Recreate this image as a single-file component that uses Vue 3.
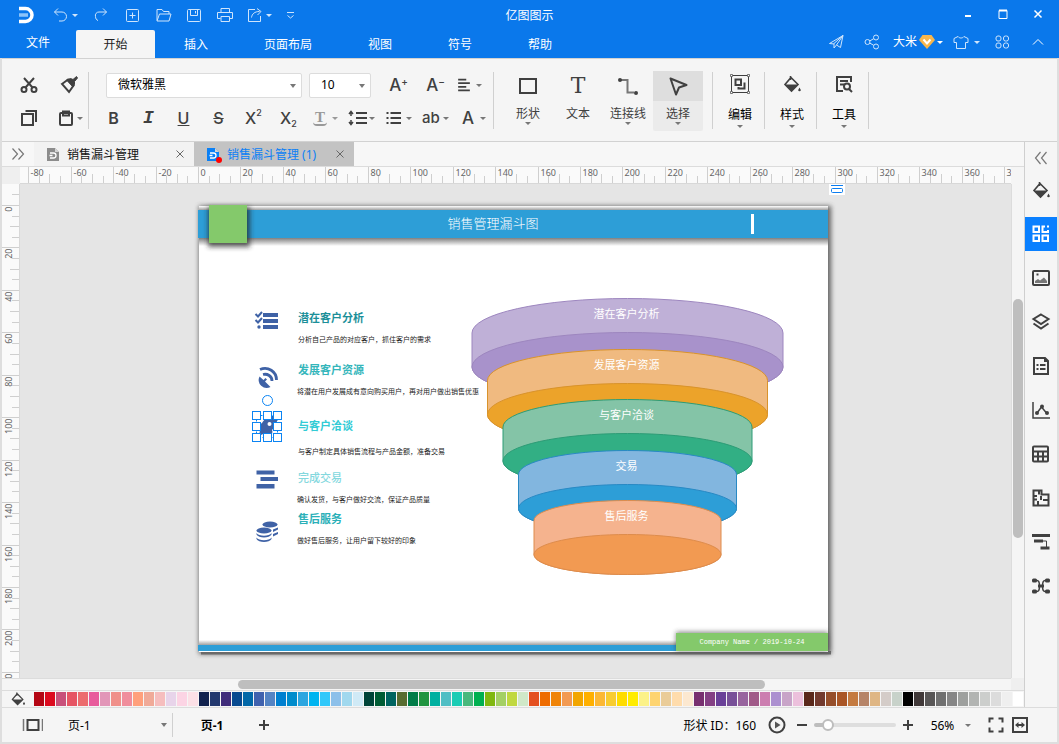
<script setup>
import { h, ref } from 'vue'

const shapes = {
  undo: '<path d="M8 3.500 4.500 7 8 10.500M4.500 7H12a3.500 3.500 0 0 1 0 9H9"/>',
  redo: '<path d="M12 3.500 15.500 7 12 10.500M15.500 7H8a3.500 3.500 0 0 0-3.500 4.500c0 2 1 3.500 2.500 4"/>',
  add: '<rect x="4.500" y="4.500" width="12" height="12" rx="1"/><path d="M10.500 7.500v6M7.500 10.500h6"/>',
  folder: '<path d="M4 15.500V4.500h5l1.500 2h5.500v2.500M4 16l2.500-7H18l-2 7z"/>',
  save: '<rect x="3.500" y="4.500" width="13" height="12" rx="1"/><path d="M6.500 4.500v6h7v-6M11.500 6v2.500"/>',
  print: '<path d="M6 7.500v-4h8.500v4M5.500 13.500h-3v-6h15v6h-3M6 11.500h8.500v5H6z"/>',
  exportTo: '<path d="M10 4.500H3.500v12h12V11M6.500 12.500c.5-3.500 3-6 8-6M12 3.500l4 3-3.500 3.500"/>',
  more: '<path d="M7 7.500h7M7.500 10.500l3 2.500 3-2.500"/>',
  plane: '<path d="M3.500 11.500 17 3.500l-2.500 12-4-2.500-2.500 3v-4.500L17 3.500M3.500 11.500l4.500.5M10.500 13 17 3.500"/>',
  share: '<circle cx="5.500" cy="10" r="2.500"/><circle cx="14" cy="5.500" r="2.500"/><circle cx="14" cy="14.500" r="2.500"/><path d="m7.700 9 4-2.300M7.700 11l4 2.300"/>',
  shirt: '<path d="M7 4.500 3 6.500v4h2.500v6h9v-6H17v-4l-4-2c-1.500 2-4.500 2-6 0z"/>',
  clover: '<rect x="4" y="4" width="5" height="5" rx="2"/><rect x="11.500" y="4" width="5" height="5" rx="2"/><rect x="4" y="11" width="5" height="5" rx="2"/><rect x="11.500" y="11" width="5" height="5" rx="2"/>',
  up: '<path d="m5 12.500 5-5 5 5" stroke="#fff"/>',
  diamond: '<path d="M5.500 3h9L18 8l-8 9L2 8z" fill="#f7b64b" stroke="none"/><path d="m6.500 7.500 3.500 4 3.500-4" stroke="#fff" stroke-width="2"/>',
  cut: '<circle cx="5" cy="14.500" r="2.500"/><circle cx="15" cy="14.500" r="2.500"/><path d="m6.500 12.500 8.500-9.500M13.500 12.500 5 3"/>',
  brush: '<path d="M3 9 9 4.500l5.500 6L10 17z"/><path d="m7.500 5 4-1.500 2.500 1 3.500-3 1 1.500-3 3.500v3l-1.500 2.500z" fill="currentColor" stroke-width="1"/>',
  copy: '<path d="M3 6h11v11H3zM6.500 3H17v11"/>',
  paste: '<rect x="4" y="5" width="12" height="12" rx="1"/><path d="M7 3.500h6v4H7z"/>',
  align: '<path d="M3.500 4h9M3.500 8h13M3.500 12h9M3.500 16h13"/>',
  lines: '<path d="M9 5h11M9 10h11M9 15h11"/><path d="M4 4v4M4 12v4M2 6l2-2.500L6 6M2 14l2 2.500L6 14" stroke-width="1.500"/>',
  bullets: '<path d="M6.500 5H17M6.500 10H17M6.500 15H17M2.500 5h2M2.500 10h2M2.500 15h2"/>',
  square: '<rect x="2" y="3" width="16" height="14"/>',
  connector: '<path d="M3 4h6.500v12.500H16" stroke="#777"/><circle cx="2" cy="4" r="2" fill="currentColor" stroke="none"/><circle cx="18" cy="17" r="2" fill="currentColor" stroke="none"/>',
  pointer: '<path d="m2.500 2.500 16 6.500-7.500 2.500L8 18.500z" stroke-linejoin="round"/>',
  group: '<path d="M1.500 1.500h17v17h-17z" stroke-width="1"/><path d="M5.500 5.500h5.500v5.500H5.500zM14.500 8.500v6h-6M8.500 13v2.500"/><g fill="#fff" stroke-width="1"><circle cx="1.500" cy="1.500" r="1.200"/><circle cx="18.500" cy="1.500" r="1.200"/><circle cx="1.500" cy="18.500" r="1.200"/><circle cx="18.500" cy="18.500" r="1.200"/></g>',
  bucket: '<path d="M8.500 2v4M9 3.500 16 10.500l-6.500 6.500L3 10.500z" stroke-width="1.600"/><path d="M3 10.500h13L9.500 17zM17.500 13.500l1.300 2.500a1.300 1.300 0 1 1-2.600 0z" fill="currentColor" stroke="none"/>',
  finder: '<path d="M17 8V3H3v14h6M6 7h8M6 10.500h4"/><circle cx="13" cy="12.500" r="3"/><path d="m15 15 3 3"/>',
  collapse: '<path d="m9.500 4-5 6 5 6M15.500 4l-5 6 5 6" stroke-width="1.200" stroke="#777"/>',
  expand: '<path d="m4.500 4.500 5 5.500-5 5.500M10.500 4.500l5 5.500-5 5.500" stroke-width="1.200" stroke="#777"/>',
  library: '<path d="M2.500 2.500h5.500v5.500H2.500zM2.500 11.500h5.500v5.500H2.500zM11.500 11.500h5.500v5.500h-5.500zM14 2.500h-2.500v5.500h5.500V6"/><path d="M16 2.500h2" stroke-width="2"/>',
  image: '<rect x="2" y="3" width="16" height="14" rx="1"/><path d="M4 15v-2l3-2 2 1.500 4-3 3 3.500v2z" fill="#777" stroke="none"/><path d="M5.500 6.500h2"/>',
  layers: '<path d="m10 2.500 7.500 4.500-7.500 5-7.500-5zM2.500 11.500l7.500 5 7.500-5"/>',
  note: '<path d="M3 2h11l3 3v13H3zM5.500 9h2M9 9h5.500M5.500 13h2M9 13h5.500" /><path d="M13 1v5h5" fill="currentColor" stroke="none"/>',
  chart: '<path d="M2 2v16h17M6 13l4.500-6 5 6" stroke-width="1.500"/><g fill="currentColor" stroke="none"><circle cx="6" cy="13" r="2"/><circle cx="11" cy="6.500" r="2"/><circle cx="16" cy="13" r="2"/></g>',
  table: '<rect x="2" y="2.500" width="15" height="15" rx="1"/><path d="M2 7.500h15M2 12.500h15M7 7.500v10M12 7.500v10"/>',
  floor: '<path d="M2.500 2.500h8v4h7v11h-15zM2.500 8h3.500M8 2.500v4M7 17.500V13M17 12h-5M10 8v4M2.500 11.500H6"/>',
  gantt: '<path d="M1 3.500h18M3 9h9M9.500 16h9" stroke-width="3"/><path d="M12 9h3.500v7" stroke-width="1"/>',
  mind: '<path d="M5 4.500h1c2 0 2.500 2 2.500 5.500s-.5 5.500-2.500 5.500H5M15 4.500h-1c-2 0-2.500 2-2.500 5.500s.5 5.500 2.500 5.500h1" stroke-width="1.500"/><g fill="currentColor" stroke="none"><rect x="1" y="2.500" width="5" height="4" rx="1.500"/><rect x="14" y="2.500" width="5" height="4" rx="1.500"/><rect x="1" y="13.500" width="5" height="4" rx="1.500"/><rect x="14" y="13.500" width="5" height="4" rx="1.500"/><rect x="7" y="8.500" width="6" height="3"/></g>',
  doc: '<path d="M4 4h8l4 4v9H4z" fill="currentColor" stroke="none"/><path d="M12 4l4 4h-4z" fill="#d5d5d5" stroke="none"/><path d="M7 9h3.500a2.500 2.500 0 0 1 0 5H7M6.500 11.500h3" stroke="#fff" stroke-width="1.300"/>',
  cross: '<path d="m6.500 6.500 7 7M13.500 6.500l-7 7" stroke-width="1"/>',
  pageView: '<rect x="5" y="5" width="11" height="10"/><path d="M1 4v12M20 4v12" stroke="#777" stroke-width="1.500"/>',
  plus: '<path d="M5 10h10M10 5v10"/>',
  minus: '<path d="M5 10h10"/>',
  play: '<circle cx="10" cy="10" r="7.500"/><path d="m8 6.500 5.500 3.500L8 13.500z" fill="#555" stroke="none"/>',
  full: '<path d="M3.500 7.500v-4h4M12.500 3.500h4v4M16.500 12.500v4h-4M7.500 16.500h-4v-4"/>',
  fit: '<rect x="3" y="3" width="14" height="14"/><path d="M6 10h8"/><path d="M8.500 7v6L5 10zM11.500 7v6l3.500-3z" fill="currentColor" stroke="none"/>',
  minimize: '<path d="M7 11h6" stroke-width="2"/>',
  maximize: '<path d="M6 5.500h8v8H6z"/><path d="M6 5.500h8" stroke-width="2"/>',
  close: '<path d="m6.500 5.500 7 7M13.500 5.500l-7 7" stroke-width="1.500"/>'
}

const Icon = (props) =>
  h('svg', {
    class: 'icon',
    viewBox: '0 0 20 20',
    fill: 'none',
    stroke: 'currentColor',
    'stroke-width': props.thin ? 1 : 2,
    'aria-hidden': 'true',
    innerHTML: shapes[props.name]
  })
Icon.props = { name: String, thin: Boolean }

const fonts = ref('微软雅黑')
const size = ref('10')
const zoom = ref(12)

const quick = [
  ['add', '新建'], ['folder', '打开'], ['save', '保存'], ['print', '打印']
]
const menus = [
  ['文件', 'file'], ['开始', 'active'], ['插入', ''], ['页面布局', 'wide'], ['视图', ''], ['符号', ''], ['帮助', '']
]
const tools = [
  { label: '形状', icon: 'square', drop: true },
  { label: '文本', glyph: 'T' },
  { label: '连接线', icon: 'connector', drop: true },
  { label: '选择', icon: 'pointer', drop: true, on: true }
]
const panels = [
  { label: '编辑', icon: 'group' }, { label: '样式', icon: 'bucket' }, { label: '工具', icon: 'finder' }
]
const side = [
  ['bucket', '填充'], ['library', '符号库'], ['image', '图片'], ['layers', '图层'], ['note', '备注'],
  ['chart', '图表'], ['table', '表格'], ['floor', '平面图'], ['gantt', '甘特图'], ['mind', '思维导图']
]

const swatches = (
  'b40614 dc0a1e c8507a e65564 ec6c6e e85c9c e296b8 f0908a f08e9c ffa07c f0aa98 f6bebe e8d4ea fcd4e4 fce0e6 ' +
  '11224e 22386e 402c7a 084a90 0268a8 4062ae 5484c4 0080d0 008ccc 2ca6e0 00b4f0 30c8fa 8cc0ea a0d8ee d0eaf6 ' +
  '004438 005c34 006460 586c30 007c48 209440 00b0a0 50bec4 1accb4 48b87c 00b050 80b810 a4d064 c0d840 d0e8c8 ' +
  'e45020 ee6c00 f08408 f29a52 f2a600 ffb000 fcb834 f8cc30 ffdc00 ffec00 fcf288 fed470 eacc98 ffdcac fce8d0 ' +
  '783070 844084 6a4098 785098 98649e a05a88 cc7eb0 ac90d0 c8a4c8 ecc0dc ' +
  '5a281a 723a2e 964e2a aa5626 c47a40 b68468 dfb684 d4ccc8 c8d2ca ' +
  '000000 403838 585656 707070 868686 9ea09e b2b4b2 cccecc dcdcdc efefef ffffff'
).split(' ')

// One tick every five units, a label every twenty.
const STEP = 10.61
const ticks = (origin, from, to) => {
  const out = []
  for (let i = from; i <= to; i++) {
    const kind = i % 4 === 0 ? 0 : i % 2 === 0 ? 1 : 2
    out.push({ at: Math.floor(origin + i * STEP) + 0.5, kind, label: kind === 0 ? String(i * 5) : '' })
  }
  return out
}
const hTicks = ticks(178.5, -16, 77)
const vTicks = ticks(21.5, -1, 44)
const start = [0, 7, 9]
const vStart = [0, 8, 10]

const tiers = [
  { label: '潜在客户分析', top: 298.5, rx: 155.5, ry: 34.5, ty: 318, light: '#bfb0d7', dark: '#a892cb', line: '#9d86bf' },
  { label: '发展客户资源', top: 349.5, rx: 140, ry: 31, ty: 369, light: '#f0ba80', dark: '#eca32a', line: '#d9932b' },
  { label: '与客户洽谈', top: 399.5, rx: 124.5, ry: 27.5, ty: 419, light: '#84c4a7', dark: '#32af84', line: '#2d9c76' },
  { label: '交易', top: 450.5, rx: 109, ry: 24, ty: 470, light: '#82b6df', dark: '#2d9ed7', line: '#2889c4' },
  { label: '售后服务', top: 500.5, rx: 93.5, ry: 20, ty: 520, light: '#f5b38e', dark: '#f29a52', line: '#de8c4c' }
]
const MID = 627.5
const body = (t) => {
  const a = t.top + t.ry
  const b = a + 34
  return `M${MID - t.rx} ${a}A${t.rx} ${t.ry} 0 0 1 ${MID + t.rx} ${a}V${b}A${t.rx} ${t.ry} 0 0 1 ${MID - t.rx} ${b}Z`
}

const notes = [
  { head: '潜在客户分析', text: '分析自己产品的对应客户，抓住客户的需求', y: 322, ty: 342, x: 298, color: '#1c8f99' },
  { head: '发展客户资源', text: '将潜在用户发展成有意向购买用户，再对用户做出销售优惠', y: 374, ty: 394, x: 297, color: '#35b6bb' },
  { head: '与客户洽谈', text: '与客户制定具体销售流程与产品金额，准备交易', y: 430, ty: 454, x: 298, color: '#32cbd5' },
  { head: '完成交易', text: '确认发货，与客户做好交流，保证产品质量', y: 482, ty: 502, x: 297, color: '#84d8de', light: true },
  { head: '售后服务', text: '做好售后服务，让用户留下较好的印象', y: 523, ty: 543, x: 297, color: '#2bb0b8' }
]
const handles = [
  [252, 411], [263, 411], [273, 411], [252, 422], [273, 422], [252, 433], [263, 433], [273, 433]
]
</script>

<template>
  <div class="app">
    <header class="top">
      <div class="titlebar">
        <div class="quick">
          <svg class="logo" viewBox="0 0 16 18" aria-hidden="true">
            <path d="M0 2.500h6.500a6.500 6.500 0 0 1 0 13H0" fill="none" stroke="#fff" stroke-width="3.500" />
            <path d="M0 9h9" stroke="#8cc4fa" stroke-width="3.500" />
          </svg>
          <button class="q-undo" aria-label="撤销"><Icon name="undo" thin /><i class="caret"></i></button>
          <button class="q" aria-label="重做"><Icon name="redo" thin /></button>
          <button v-for="q in quick" :key="q[0]" class="q" :aria-label="q[1]"><Icon :name="q[0]" thin /></button>
          <button class="q-export" aria-label="导出"><Icon name="exportTo" thin /><i class="caret"></i></button>
          <button class="q-more" aria-label="更多"><Icon name="more" thin /></button>
        </div>
        <div class="title">亿图图示</div>
        <div class="window">
          <button aria-label="最小化"><Icon name="minimize" thin /></button>
          <button aria-label="最大化"><Icon name="maximize" thin /></button>
          <button aria-label="关闭"><Icon name="close" thin /></button>
        </div>
      </div>
      <div class="menubar">
        <nav class="menus">
          <button v-for="m in menus" :key="m[0]" class="menu" :class="m[1]">{{ m[0] }}</button>
        </nav>
        <div class="account">
          <button class="acc" aria-label="发送"><Icon name="plane" thin /></button>
          <button class="acc" aria-label="分享"><Icon name="share" thin /></button>
          <button class="user">大米<Icon name="diamond" thin /><i class="caret"></i></button>
          <button class="skin" aria-label="皮肤"><Icon name="shirt" thin /><i class="caret"></i></button>
          <button class="acc" aria-label="应用"><Icon name="clover" thin /></button>
          <button class="acc" aria-label="收起"><Icon name="up" thin /></button>
        </div>
      </div>
    </header>

    <div class="frame">
      <section class="ribbon">
        <div class="clip">
          <div class="row">
            <button class="c1" aria-label="剪切"><Icon name="cut" /></button>
            <button class="c2" aria-label="格式刷"><Icon name="brush" /></button>
          </div>
          <div class="row">
            <button class="c1" aria-label="复制"><Icon name="copy" /></button>
            <button class="c3" aria-label="粘贴"><Icon name="paste" /><i class="caret"></i></button>
          </div>
        </div>
        <span class="sep"></span>
        <div class="fontgroup">
          <div class="row first">
            <label class="pick family">
              <select v-model="fonts" aria-label="字体"><option>微软雅黑</option></select>
            </label>
            <label class="pick size">
              <select v-model="size" aria-label="字号"><option>10</option></select>
            </label>
            <button class="grow" aria-label="增大字号">A<sup>+</sup></button>
            <button class="grow" aria-label="减小字号">A<sup>−</sup></button>
            <button class="drop" aria-label="对齐"><Icon name="align" class="small-icon" /><i class="caret"></i></button>
          </div>
          <div class="row second">
            <button class="fmt">B</button>
            <button class="fmt ital">I</button>
            <button class="fmt under">U</button>
            <button class="fmt strike">S</button>
            <button class="fmt ex">X<sup>2</sup></button>
            <button class="fmt ex">X<sub>2</sub></button>
            <button class="drop dim"><span class="glyph arc">T</span><i class="caret"></i></button>
            <button class="drop" aria-label="行距"><Icon name="lines" /><i class="caret"></i></button>
            <button class="drop" aria-label="列表"><Icon name="bullets" /><i class="caret"></i></button>
            <button class="drop"><span class="glyph">ab</span><i class="caret"></i></button>
            <button class="drop"><span class="glyph big">A</span><i class="caret"></i></button>
          </div>
        </div>
        <span class="sep"></span>
        <div class="tools">
          <button v-for="t in tools" :key="t.label" class="tool" :class="{ on: t.on }">
            <span class="pic"><Icon v-if="t.icon" :name="t.icon" /><span v-else class="slab">{{ t.glyph }}</span></span>
            <span class="cap">{{ t.label }}</span>
            <i v-if="t.drop" class="caret"></i>
          </button>
        </div>
        <template v-for="p in panels" :key="p.label">
          <span class="sep"></span>
          <button class="tool panel">
            <span class="pic"><Icon :name="p.icon" /></span>
            <span class="cap">{{ p.label }}</span>
            <i class="caret"></i>
          </button>
        </template>
        <span class="sep"></span>
      </section>

      <main class="work">
        <div class="left">
          <div class="docs">
            <button class="expand" aria-label="展开"><Icon name="expand" /></button>
            <div class="doc"><Icon name="doc" class="file" /><span>销售漏斗管理</span><button aria-label="关闭"><Icon name="cross" /></button></div>
            <div class="doc current"><Icon name="doc" class="file" /><b class="dot"></b><span>销售漏斗管理 (1)</span><button aria-label="关闭"><Icon name="cross" /></button></div>
          </div>
          <div class="hruler">
            <div class="corner"></div>
            <svg class="fill">
              <g v-for="t in hTicks" :key="t.at">
                <line :x1="t.at" :x2="t.at" :y1="start[t.kind]" y2="16" />
                <text v-if="t.label" :x="t.at + 2" y="9">{{ t.label }}</text>
              </g>
            </svg>
            <div class="cap-end"></div>
          </div>
          <div class="stage">
            <div class="vruler">
              <svg class="fill">
                <g v-for="t in vTicks" :key="t.at">
                  <line :x1="vStart[t.kind]" x2="17" :y1="t.at" :y2="t.at" />
                  <text v-if="t.label" :transform="`translate(10 ${t.at + 1}) rotate(-90)`" text-anchor="end">{{ t.label }}</text>
                </g>
              </svg>
            </div>
            <div class="canvas">
              <svg class="drawing" width="991" height="494">
                <defs>
                  <filter id="soft" x="-20%" y="-40%" width="140%" height="200%"><feGaussianBlur stdDeviation="2.500" /></filter>
                  <linearGradient id="fade" x1="0" y1="0" x2="0" y2="1">
                    <stop offset="0" stop-color="#555" stop-opacity=".75" /><stop offset="1" stop-color="#555" stop-opacity="0" />
                  </linearGradient>
                  <linearGradient id="rise" x1="0" y1="1" x2="0" y2="0">
                    <stop offset="0" stop-color="#777" stop-opacity=".7" /><stop offset="1" stop-color="#777" stop-opacity="0" />
                  </linearGradient>
                </defs>
                <g transform="translate(-20 -184)">
                  <rect x="199" y="206" width="632" height="448" fill="#555" opacity=".9" filter="url(#soft)" />
                  <path d="M201 654.500V651H831V654.500Z" fill="#6a6a6a" />
                  <rect x="199" y="206" width="629" height="446" fill="#fff" />
                  <rect x="199" y="206" width="629" height="4" fill="url(#rise)" />
                  <rect x="199" y="238" width="629" height="8" fill="url(#fade)" />
                  <rect x="198" y="210" width="630" height="28" fill="#2d9ed7" />
                  <rect x="208" y="207" width="42" height="40" fill="#222" opacity=".7" filter="url(#soft)" />
                  <rect x="209" y="205" width="38" height="38" fill="#84c96b" />
                  <text x="493" y="228" class="kai">销售管理漏斗图</text>
                  <rect x="751" y="214" width="3" height="20" fill="#fff" />
                  <rect x="199" y="640" width="629" height="5" fill="url(#rise)" />
                  <rect x="198" y="645" width="630" height="6" fill="#2d9ed7" />
                  <rect x="676" y="632" width="152" height="19" fill="#333" opacity=".6" filter="url(#soft)" />
                  <rect x="676" y="633" width="152" height="18" fill="#84c96b" />
                  <text x="752" y="644" class="company">Company Name / 2019-10-24</text>

                  <g v-for="t in tiers" :key="t.label" :stroke="t.line" stroke-width="1">
                    <path :d="body(t)" :fill="t.light" />
                    <ellipse :cx="MID" :cy="t.top + t.ry + 34" :rx="t.rx" :ry="t.ry" :fill="t.dark" />
                    <text :x="MID - 1" :y="t.ty" class="tier">{{ t.label }}</text>
                  </g>

                  <g v-for="n in notes" :key="n.head">
                    <text x="298" :y="n.y" class="head" :class="{ light: n.light }" :fill="n.color">{{ n.head }}</text>
                    <text :x="n.x" :y="n.ty" class="small">{{ n.text }}</text>
                  </g>

                  <g fill="#3f62a6">
                    <path d="M263 313h15v4h-15zM263 319h15v4h-15zM263 325h15v4h-15z" />
                    <circle cx="259" cy="327" r="1.700" />
                    <path d="m255.500 314 2.500 2.500 4-4.500M255.500 320l2.500 2.500 4-4.500" fill="none" stroke="#3f62a6" stroke-width="2" />
                    <path d="M259.500 376.500a8 8 0 0 0 11 10.500l-5.500-5.500 2-2-1.500-1.500-2 2z" />
                    <g fill="none" stroke="#3f62a6" stroke-width="2.800">
                      <path d="M260 369.500c8-3.500 16.500 2 16.500 10.500" />
                      <path d="M263 374.500c4.500-1 9 1.500 9 6.500" />
                    </g>
                    <path d="M256.500 470.500h18v4h-18zM260.500 477h17.500v4h-17.500zM256.500 484h18v4.500h-18z" />
                    <ellipse cx="270" cy="524.500" rx="7.500" ry="3" />
                    <ellipse cx="264" cy="530.500" rx="7.500" ry="3" />
                    <path d="M256.500 533c2 3.500 13 3.500 15 0v1.500c-2 4-13 4-15 0zM256.500 537.500c2 3.500 13 3.500 15 0v1.500c-2 4-13 4-15 0zM273 529.500l5-2v2l-5 2.500zM273 534l5-2v2l-5 2.500z" />
                    <path d="M277 416c-7-1-12 2-15 7l-6 4c0 2 2 3 4 3l-1 6 6-3 4 4c3-1 4-5 3-7 4-4 6-9 5-14z" />
                    <circle cx="269.500" cy="424" r="2" fill="#fff" />
                  </g>
                  <g fill="#fff" stroke="#0b84f3" stroke-width="1">
                    <path d="M256.500 415.500h21v22h-21z" fill="none" stroke-dasharray="2 2" />
                    <circle cx="267.500" cy="400.500" r="5" />
                    <rect v-for="(p, i) in handles" :key="i" :x="p[0] + 0.5" :y="p[1] + 0.5" width="8" height="8" />
                  </g>
                  <g fill="#fff" stroke="#0b7df0">
                    <rect x="829" y="184" width="16" height="11" stroke="none" />
                    <path d="M831 185.500h12" />
                    <rect x="831.500" y="188.500" width="11" height="4" rx="1" />
                  </g>
                </g>
              </svg>
            </div>
            <div class="vscroll"><div class="vthumb"></div></div>
          </div>
          <div class="hscroll"><div class="track"><div class="hthumb"></div></div></div>
          <div class="palette">
            <button class="fillpick" aria-label="填充颜色"><Icon name="bucket" /></button>
            <button v-for="c in swatches" :key="c" class="sw" :aria-label="'#' + c" :style="{ background: '#' + c }"></button>
          </div>
        </div>
        <aside class="side">
          <button class="fold" aria-label="折叠"><Icon name="collapse" /></button>
          <button v-for="(s, i) in side" :key="s[0]" class="sbtn" :class="{ on: i === 1 }" :aria-label="s[1]"><Icon :name="s[0]" /></button>
        </aside>
      </main>

      <footer class="status">
        <button class="view" aria-label="页面视图"><Icon name="pageView" /></button>
        <label class="page">
          <select aria-label="页面"><option>页-1</option></select>
        </label>
        <button class="sheet">页-1</button>
        <button class="addpage" aria-label="添加页面"><Icon name="plus" /></button>
        <div class="right">
          <span class="info">形状 ID：160</span>
          <button class="s1" aria-label="播放"><Icon name="play" /></button>
          <button class="s2" aria-label="缩小"><Icon name="minus" /></button>
          <input v-model="zoom" type="range" min="0" max="100" aria-label="缩放" />
          <button class="s2" aria-label="放大"><Icon name="plus" /></button>
          <button class="pct">56%<i class="caret"></i></button>
          <button class="s3" aria-label="全屏"><Icon name="full" /></button>
          <button class="s3" aria-label="适合页面"><Icon name="fit" /></button>
        </div>
      </footer>
    </div>
  </div>
</template>

<style>
body {
  margin: 0;
}
</style>

<style scoped>
.app {
  display: flex;
  flex-direction: column;
  min-height: 100vh;
  background: #f5f5f5;
  color: #111;
  font: 12px/16px "Noto Sans", "Noto Sans CJK SC", sans-serif;
}
.app * {
  box-sizing: border-box;
}
button {
  display: flex;
  align-items: center;
  justify-content: center;
  flex: none;
  margin: 0;
  padding: 0;
  border: 0;
  background: none;
  color: inherit;
  font: inherit;
}
select {
  appearance: none;
  border: 0;
  background: none;
  color: inherit;
  font: inherit;
  outline: 0;
}
.icon {
  width: 20px;
  height: 20px;
  flex: none;
  display: block;
}
.caret {
  width: 0;
  height: 0;
  flex: none;
  border: 3px solid transparent;
  border-top-color: currentColor;
  border-bottom: 0;
}
.top {
  background: #0a78eb;
  color: #fff;
}
.titlebar {
  display: grid;
  grid-template-columns: 1fr auto 1fr;
  height: 30px;
  align-items: center;
}
.title {
  padding-top: 2px;
}
.quick {
  display: flex;
  align-items: center;
  color: #cfe5fc;
}
.logo {
  width: 16px;
  height: 18px;
  margin: 0 16px 0 19px;
  flex: none;
}
.q {
  width: 31px;
}
.q-undo {
  width: 34px;
  padding-right: 8px;
  gap: 2px;
}
.q-export {
  width: 36px;
  gap: 1px;
}
.q-more {
  width: 28px;
}
.window {
  display: flex;
  justify-content: flex-end;
  padding-right: 4px;
}
.window button {
  width: 35px;
}
.menubar {
  display: flex;
  justify-content: space-between;
  height: 28px;
}
.menus,
.account {
  display: flex;
}
.menu {
  width: 80px;
  padding-top: 2px;
}
.menu.file {
  width: 76px;
  padding: 0 0 2px;
}
.menu.wide {
  width: 104px;
}
.menu.active {
  width: 79px;
  margin-right: 1px;
  background: #f5f5f5;
  color: #222;
  border-radius: 2px 2px 0 0;
}
.account {
  align-items: center;
  padding: 0 3px 4px 0;
  color: #cfe5fc;
}
.acc {
  width: 36px;
}
.user {
  width: 56px;
  color: #fff;
}
.skin {
  width: 38px;
  gap: 3px;
}
.frame {
  flex: 1;
  display: flex;
  flex-direction: column;
  border: solid #dedede;
  border-width: 0 2px 2px;
}
.ribbon {
  display: flex;
  height: 84px;
  padding-top: 12px;
  border-top: 1px solid #d2d2d2;
  border-bottom: 1px solid #d2d2d2;
  color: #404040;
}
.ribbon .caret {
  color: #777;
}
.sep {
  width: 1px;
  height: 57px;
  margin-top: 1px;
  background: #d0d0d0;
  flex: none;
}
.clip {
  width: 86px;
}
.row {
  display: flex;
  align-items: center;
  height: 34px;
}
.clip .row {
  padding-left: 17px;
}
.row.first,
.clip .row:first-child {
  height: 28px;
  margin-bottom: 2px;
}
.c2 {
  margin-left: 20px;
}
.c3 {
  margin-left: 17px;
  gap: 1px;
}
.fontgroup {
  width: 404px;
  padding-left: 7px;
}
.row.first {
  padding-left: 10px;
}
.pick {
  position: relative;
  display: block;
  flex: none;
  height: 25px;
  background: #fff;
  border: 1px solid #dcdcdc;
  border-radius: 2px;
  color: #000;
}
.pick::after,
.page::after {
  content: "";
  position: absolute;
  right: 5px;
  top: 10px;
  border: 3px solid transparent;
  border-top: 4px solid #777;
  border-bottom: 0;
}
.pick select {
  width: 100%;
  height: 23px;
  padding: 0 11px;
}
.family {
  width: 196px;
}
.size {
  width: 62px;
  margin: 0 9px 0 7px;
}
.grow {
  width: 37px;
  font: 500 17px/20px Inter, sans-serif;
}
.grow sup {
  align-self: flex-start;
  font-size: 10px;
  line-height: 12px;
}
.fmt {
  width: 35px;
  font: 600 16px/20px Inter, sans-serif;
}
.ital {
  font: italic bold 18px/20px "Liberation Mono", monospace;
}
.under {
  font-weight: 500;
  text-decoration: underline;
}
.strike {
  font-weight: 500;
  text-decoration: line-through;
}
.ex {
  font-weight: 500;
}
.ex sup,
.ex sub {
  font-size: 9px;
  line-height: 9px;
}
.ex sup {
  align-self: flex-start;
}
.ex sub {
  align-self: flex-end;
}
.drop {
  width: 37px;
  justify-content: flex-start;
  gap: 2px;
}
.small-icon {
  height: 18px;
}
.ex + .drop {
  margin-left: 4px;
}
.glyph {
  width: 20px;
  font: 500 15px/20px Inter, sans-serif;
  text-align: center;
}
.glyph.big {
  font-size: 17px;
}
.glyph.arc {
  width: 14px;
  height: 16px;
  margin: 0 3px;
  border-bottom: 2px solid #999;
  border-radius: 4px;
  font: bold 15px/14px "Liberation Serif", serif;
}
.dim,
.dim .caret {
  color: #999;
}
.tools {
  display: flex;
  margin: 0 9px;
}
.tool {
  width: 50px;
  height: 60px;
  flex-direction: column;
  justify-content: flex-start;
  border-radius: 2px;
}
.tool.on {
  background: #ebebeb;
}
.tool .pic {
  display: flex;
  align-items: center;
  justify-content: center;
  width: 100%;
  height: 30px;
  margin-bottom: 5px;
}
.tool.on .pic {
  background: #dedede;
}
.tool.panel {
  width: 51px;
  padding-left: 3px;
  color: #404040;
}
.panel .pic {
  height: 25px;
  margin-bottom: 11px;
}
.panel .cap {
  color: #000;
}
.panel .caret {
  margin-top: 2px;
}
.slab {
  font: 22px/24px "DejaVu Serif", serif;
}
.work {
  flex: 1;
  display: flex;
}
.left {
  flex: 1;
  min-width: 0;
  display: flex;
  flex-direction: column;
}
.docs {
  display: flex;
  height: 25px;
  border-bottom: 1px solid #dcdcdc;
  background: #f7f7f7;
}
.expand {
  width: 32px;
}
.doc {
  position: relative;
  display: flex;
  align-items: center;
  width: 160px;
  padding: 0 4px 0 9px;
  background: #f2f2f2;
}
.doc .file {
  color: #8c8c8c;
}
.doc span {
  flex: 1;
  padding: 2px 0 0 4px;
}
.doc button {
  color: #666;
}
.doc.current {
  background: #c3c3c3;
  color: #0b80f5;
}
.doc.current .file {
  color: #0b80f5;
}
.dot {
  position: absolute;
  left: 22px;
  top: 15px;
  width: 6px;
  height: 6px;
  border-radius: 50%;
  background: #f00;
}
.hruler {
  display: flex;
  height: 17px;
  background: #fafafa;
}
.corner {
  width: 18px;
  background: #efefef;
}
.hruler .fill {
  flex: 1;
  width: 0;
  height: 17px;
  border-bottom: 1px solid #d8d8d8;
}
.fill {
  display: block;
}
.fill line {
  stroke: #cfcfcf;
}
.fill text {
  font-size: 9px;
  fill: #666;
}
.cap-end {
  width: 13px;
  background: #f5f5f5;
}
.stage {
  flex: 1;
  display: flex;
  min-height: 400px;
}
.vruler {
  position: relative;
  width: 18px;
  background: #fafafa;
  border-right: 1px solid #d8d8d8;
  overflow: hidden;
}
.vruler .fill {
  position: absolute;
  inset: 0;
  width: 100%;
  height: 100%;
}
.canvas {
  position: relative;
  flex: 1;
  overflow: hidden;
  background: #e5e5e5;
}
.drawing {
  position: absolute;
  left: 0;
  top: 0;
}
.drawing text {
  font-family: "Noto Sans", "Noto Sans CJK SC", sans-serif;
}
.drawing .kai {
  font-size: 13px;
  font-weight: 300;
  fill: #fff;
  text-anchor: middle;
}
.drawing .company {
  font-family: "Liberation Mono", monospace;
  font-size: 7px;
  fill: #fff;
  text-anchor: middle;
}
.drawing .tier {
  font-size: 11px;
  fill: #fff;
  stroke: none;
  text-anchor: middle;
}
.drawing .head {
  font-size: 11px;
  font-weight: 700;
}
.drawing .head.light {
  font-weight: 500;
}
.drawing .small {
  font-size: 7px;
  fill: #222;
}
.vscroll {
  width: 13px;
  padding: 0 1px;
  border-left: 1px solid #dcdcdc;
  background: #f5f5f5;
  display: flex;
  flex-direction: column;
}
.vthumb {
  height: 239px;
  margin-top: 115px;
  border-radius: 5px;
  background: #bebebe;
}
.hscroll {
  height: 12px;
  background: #efefef;
}
.track {
  height: 12px;
  margin-right: 13px;
  padding: 1px 0;
  border-top: 1px solid #dcdcdc;
  background: #f5f5f5;
}
.hthumb {
  width: 527px;
  height: 9px;
  margin-left: 236px;
  border-radius: 5px;
  background: #bebebe;
}
.palette {
  display: flex;
  align-items: center;
  gap: 1px;
  height: 17px;
  border-top: 1px solid #dcdcdc;
  overflow: hidden;
}
.fillpick {
  width: 31px;
  color: #404040;
}
.fillpick .icon {
  width: 16px;
  height: 16px;
}
.sw {
  width: 10px;
  height: 14px;
}
.side {
  display: flex;
  flex-direction: column;
  width: 33px;
  flex: none;
  border-left: 1px solid #cfcfcf;
  color: #404040;
}
.fold {
  height: 31px;
}
.sbtn {
  height: 34px;
  margin-bottom: 10px;
}
.sbtn.on {
  background: #0a80ff;
  color: #fff;
}
.status {
  display: flex;
  align-items: center;
  height: 35px;
  border-top: 1px solid #dcdcdc;
  color: #000;
}
.status .icon {
  color: #404040;
}
.status .caret {
  color: #777;
}
.view {
  width: 60px;
}
.view .icon {
  width: 21px;
}
.page {
  position: relative;
  width: 111px;
  height: 24px;
  border-right: 1px solid #d0d0d0;
}
.page select {
  width: 100%;
  height: 24px;
  padding: 1px 6px 0;
}
.sheet {
  width: 78px;
  padding-top: 1px;
  font-weight: 700;
}
.addpage {
  width: 26px;
}
.right {
  display: flex;
  align-items: center;
  margin-left: auto;
  padding-right: 25px;
}
.info {
  padding: 1px 8px 0 0;
}
.s1 {
  width: 26px;
}
.s2 {
  width: 24px;
}
.s3 {
  width: 24px;
}
.pct {
  width: 64px;
  padding: 1px 2px 0 0;
  gap: 11px;
}
input[type="range"] {
  appearance: none;
  width: 82px;
  height: 12px;
  margin: 0;
  background: none;
}
input[type="range"]::-webkit-slider-runnable-track {
  height: 4px;
  border-radius: 2px;
  background: linear-gradient(to right, #bdbdbd 12px, #dedede 12px);
}
input[type="range"]::-webkit-slider-thumb {
  appearance: none;
  width: 12px;
  height: 12px;
  margin-top: -4px;
  border: 2px solid #bdbdbd;
  border-radius: 50%;
  background: #fff;
}
</style>
